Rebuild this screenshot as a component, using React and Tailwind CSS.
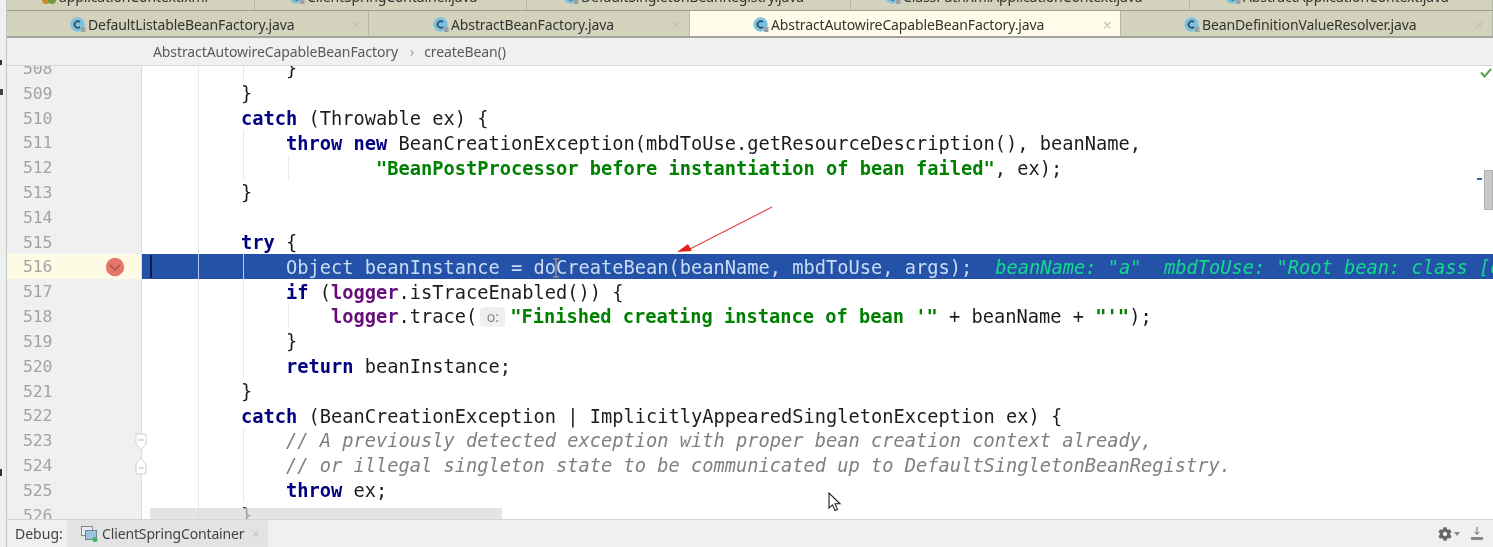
import { FaCog } from "react-icons/fa";

const SANS = "font-['Noto_Sans','Liberation_Sans',sans-serif]";
const KW = "font-bold text-[#000080]";
const FIELD = "font-bold text-[#660e7a]";
const STR = "font-bold text-[#008000]";
const COM = "italic text-[#808080]";

const topTabs = [
  { name: "applicationContext.xml", w: "w-[248px]", pl: "pl-[34px]", xml: true },
  { name: "ClientSpringContainer.java", w: "w-[272px]", pl: "pl-[34px]" },
  { name: "DefaultSingletonBeanRegistry.java", w: "w-[324px]", pl: "pl-[36px]" },
  { name: "ClassPathXmlApplicationContext.java", w: "w-[339px]", pl: "pl-[34px]" },
  { name: "AbstractApplicationContext.java", w: "w-[303px]", pl: "pl-[35px]" },
];

const mainTabs = [
  { name: "DefaultListableBeanFactory.java", w: "w-[362px]", pl: "pl-[63px]" },
  { name: "AbstractBeanFactory.java", w: "w-[321px]", pl: "pl-[64px]" },
  { name: "AbstractAutowireCapableBeanFactory.java", w: "w-[431px]", pl: "pl-[63px]", active: true },
  { name: "BeanDefinitionValueResolver.java", w: "w-[372px]", pl: "pl-[63px]" },
];

// guides: offsets are relative to the code column
const G1 = "left-[56px]";
const G2 = "left-[101px]";
const G3 = "left-[146px]";

const lines = [
  { n: 508, g: [G1, G2], t: [["", "            }"]] },
  { n: 509, g: [G1], t: [["", "        }"]] },
  { n: 510, g: [G1], t: [["", "        "], [KW, "catch"], ["", " (Throwable ex) {"]] },
  { n: 511, g: [G1, G2], t: [["", "            "], [KW, "throw new"], ["", " BeanCreationException(mbdToUse.getResourceDescription(), beanName,"]] },
  { n: 512, g: [G1, G2, G3], t: [["", "                    "], [STR, "\"BeanPostProcessor before instantiation of bean failed\""], ["", ", ex);"]] },
  { n: 513, g: [G1], t: [["", "        }"]] },
  { n: 514, g: [G1], t: [] },
  { n: 515, g: [G1], t: [["", "        "], [KW, "try"], ["", " {"]] },
  { n: 516, current: true, g: [G1, G2], t: [["", "            Object beanInstance = doCreateBean(beanName, mbdToUse, args);"]] },
  { n: 517, g: [G1, G2], t: [["", "            "], [KW, "if"], ["", " ("], [FIELD, "logger"], ["", ".isTraceEnabled()) {"]] },
  { n: 518, g: [G1, G2, G3], hint: true },
  { n: 519, g: [G1, G2], t: [["", "            }"]] },
  { n: 520, g: [G1, G2], t: [["", "            "], [KW, "return"], ["", " beanInstance;"]] },
  { n: 521, g: [G1], t: [["", "        }"]] },
  { n: 522, g: [G1], t: [["", "        "], [KW, "catch"], ["", " (BeanCreationException | ImplicitlyAppearedSingletonException ex) {"]] },
  { n: 523, g: [G1, G2], fold: "top", t: [["", "            "], [COM, "// A previously detected exception with proper bean creation context already,"]] },
  { n: 524, g: [G1, G2], fold: "bottom", t: [["", "            "], [COM, "// or illegal singleton state to be communicated up to DefaultSingletonBeanRegistry."]] },
  { n: 525, g: [G1, G2], t: [["", "            "], [KW, "throw"], ["", " ex;"]] },
  { n: 526, g: [G1], t: [["", "        }"]] },
];

function ClassIcon({ xml }) {
  if (xml) {
    return (
      <svg width="16" height="16" viewBox="0 0 16 16" className="shrink-0">
        <circle cx="5" cy="11" r="4" fill="#c98a2c" />
        <circle cx="11" cy="11" r="4" fill="#6f9e3f" />
      </svg>
    );
  }
  return (
    <svg width="16" height="18" viewBox="0 0 16 18" className="shrink-0">
      <circle cx="7.5" cy="8.5" r="7.2" fill="#7cc1de" />
      <path d="M10 6.2A3.2 3.2 0 1 0 10 10.8" fill="none" stroke="#2d4f6b" strokeWidth="1.7" />
      <rect x="11" y="11" width="4.5" height="5" fill="#9aa3a3" />
    </svg>
  );
}

function Tab({ tab }) {
  return (
    <div
      className={`relative flex h-[27px] shrink-0 items-center border-r border-[#b6b6a4] ${tab.w} ${tab.pl} ${
        tab.active ? "bg-[#fffde9]" : "bg-[#d2d2bd]"
      }`}
    >
      <ClassIcon xml={tab.xml} />
      <span className="ml-[2px] text-[14px] tracking-[-0.12px] whitespace-nowrap text-[#33352f]">{tab.name}</span>
      <span className="absolute right-[8px] text-[16px] text-[#c4c4b2]">×</span>
    </div>
  );
}

function BreakpointIcon() {
  return (
    <svg width="20" height="20" viewBox="0 0 20 20">
      <circle cx="10" cy="10" r="9.2" fill="#e5746a" />
      <path d="M5 8 10 13 15 8" fill="none" stroke="#96504a" strokeWidth="1.1" />
    </svg>
  );
}

function FoldMark({ kind }) {
  return (
    <svg width="12" height="18" viewBox="0 0 12 18" className="absolute right-[-6px]">
      <path
        d={kind === "top" ? "M1 1H11V11L6 17 1 11Z" : "M6 1 11 7V17H1V7Z"}
        fill="#fff"
        stroke="#d0d0d0"
      />
      <path d={kind === "top" ? "M3.5 7H8.5" : "M3.5 11H8.5"} stroke="#b5b5b5" />
    </svg>
  );
}

function CodeLine({ line }) {
  return (
    <div className="flex h-[24.82px]">
      <div
        className={`relative z-10 flex w-[135px] shrink-0 items-center border-r border-[#dcdcdc] pl-[16px] pt-[3px] text-[16.5px] tracking-[-0.2px] text-[#a3a3a3] ${
          line.current ? "bg-[#fdfbe4]" : "bg-[#f0f0f0]"
        }`}
      >
        {line.n}
        {line.current ? (
          <span className="absolute left-[98px] top-[3px]">
            <BreakpointIcon />
          </span>
        ) : null}
        {line.fold ? <FoldMark kind={line.fold} /> : null}
      </div>
      <div
        className={`relative flex flex-1 items-center overflow-hidden pl-[9px] pt-[3px] whitespace-pre ${
          line.current ? "bg-[#2352a8] text-[#cbdcf2]" : "bg-white text-[#1c1c1c]"
        }`}
      >
        {line.g.map((g) => (
          <span key={g} className={`absolute top-0 bottom-0 w-px ${g} ${line.current ? "bg-[#b9cbe6]" : "bg-[#e8e8e8]"}`} />
        ))}
        {line.current ? <span className="absolute left-[8px] top-[1px] bottom-[1px] w-[2px] bg-[#0b1c4a]" /> : null}
        {line.hint ? (
          <>
            <span>{"                "}</span>
            <span className={FIELD}>logger</span>
            <span>.trace(</span>
            <span className={`ml-[3px] mr-[5px] w-[25px] rounded-[4px] bg-[#efefef] text-center text-[14px] leading-[20px] text-[#8a8a8a] ${SANS}`}>o:</span>
            <span className={STR}>"Finished creating instance of bean '"</span>
            <span> + beanName + </span>
            <span className={STR}>"'"</span>
            <span>);</span>
          </>
        ) : (
          line.t.map(([cls, text], i) => (
            <span key={i} className={cls}>
              {text}
            </span>
          ))
        )}
        {line.current ? (
          <span className="ml-[23px] italic text-[#14d88c]">{'beanName: "a"  mbdToUse: "Root bean: class [org.springframework'}</span>
        ) : null}
      </div>
    </div>
  );
}

export default function App() {
  return (
    <div className={`flex h-[547px] w-[1493px] overflow-hidden bg-white blur-[0.35px] ${SANS}`}>
      {/* sliver of the desktop left of the IDE window */}
      <div className="flex w-[7px] shrink-0 flex-col border-r border-[#c4c4c4] bg-[#eef0f0]">
        <div className="mt-[60px] h-[5px] w-[2px] bg-[#333]" />
        <div className="mt-[24px] h-[6px] w-[3px] bg-[#444]" />
        <div className="mt-[374px] h-[7px] w-[2px] bg-[#333]" />
      </div>

      <div className="flex min-w-0 flex-1 flex-col">
        <div className="h-[11px] shrink-0 overflow-hidden border-b border-[#9e9e8e]">
          <div className="-mt-[17px] flex">
            {topTabs.map((t) => (
              <Tab key={t.name} tab={t} />
            ))}
          </div>
        </div>
        <div className="flex h-[27px] shrink-0 overflow-hidden border-b-2 border-[#a5a59b]">
          {mainTabs.map((t) => (
            <Tab key={t.name} tab={t} />
          ))}
        </div>

        <div className="flex h-[28px] shrink-0 items-center border-b border-[#d8d8d8] bg-[#eff0f0] pl-[146px] text-[14px] tracking-[-0.1px] text-[#5a5a5a]">
          <span>AbstractAutowireCapableBeanFactory</span>
          <span className="ml-[12px] mr-[10px] text-[#a0a0a0]">›</span>
          <span>createBean()</span>
        </div>

        <div className="relative min-h-0 flex-1 overflow-hidden font-['DejaVu_Sans_Mono',monospace] text-[18.7px]">
          <div className="-mt-[10.6px]">
            {lines.map((l) => (
              <CodeLine key={l.n} line={l} />
            ))}
          </div>

          {/* overlays: editor scrollbars, stripe marks, annotation and pointers */}
          <div className="absolute bottom-0 left-[143px] h-[11px] w-[352px] bg-[#d8d8d8]/70" />
          <svg width="12" height="10" viewBox="0 0 12 10" className="absolute right-[1px] top-[2px]">
            <path d="M1 4.5 4.5 8.5 11 1" fill="none" stroke="#5a9e50" strokeWidth="2" />
          </svg>
          <div className="absolute right-[11px] top-[112px] h-[2px] w-[5px] bg-[#3a5f9a]" />
          <div className="absolute right-0 top-[104px] h-[40px] w-[9px] border border-[#b0b0b0] bg-[#c9c9c9]" />
          <svg width="110" height="54" viewBox="0 0 110 54" className="absolute left-[667px] top-[137px]">
            <path d="M98 4 14 47" stroke="#e2403c" strokeWidth="1.2" />
            <path d="M3 49 14 41 18 48Z" fill="#e8201c" />
          </svg>
          <svg width="8" height="20" viewBox="0 0 8 20" className="absolute left-[545px] top-[192px]">
            <path d="M1 1H7M4 1V19M1 19H7" fill="none" stroke="#c8a878" strokeWidth="1" />
          </svg>
          <svg width="16" height="22" viewBox="0 0 16 22" className="absolute left-[821px] top-[426px]">
            <path d="M1 1V16L4.5 12.8 7 18.5 9.5 17.4 7 11.8H12Z" fill="#fff" stroke="#222" strokeWidth="1.1" />
          </svg>
        </div>

        <div className="flex h-[28px] shrink-0 items-center border-t border-[#d4d4d4] bg-[#f0f0f0] text-[14px] text-[#444]">
          <span className="ml-[8px] w-[52px]">Debug:</span>
          <div className="flex h-full w-[201px] items-center bg-[#e3e3e3] pl-[14px]">
            <svg width="17" height="17" viewBox="0 0 17 17" className="shrink-0">
              <rect x="0.5" y="1.5" width="11" height="9" fill="#e8eef2" stroke="#7b8a94" />
              <rect x="4.5" y="5.5" width="11" height="9" fill="#9cc4dc" stroke="#6b8496" />
              <circle cx="14" cy="14.5" r="2.5" fill="#3fb45a" />
            </svg>
            <span className="ml-[4px] text-[14px] tracking-[-0.14px]">ClientSpringContainer</span>
            <span className="ml-[7px] text-[#c4c4c4]">×</span>
          </div>
          <div className="ml-auto flex items-center pr-[9px]">
            <FaCog className="text-[14px] text-[#666]" />
            <svg width="6" height="4" viewBox="0 0 6 4" className="ml-[2px]">
              <path d="M0 0H6L3 4Z" fill="#888" />
            </svg>
            <svg width="14" height="16" viewBox="0 0 14 16" className="ml-[10px]">
              <path d="M7 1V8M4.5 5.8 7 8.5 9.5 5.8" fill="none" stroke="#666" />
              <rect x="1" y="11" width="12" height="3" fill="#888" />
            </svg>
          </div>
        </div>
      </div>
    </div>
  );
}
